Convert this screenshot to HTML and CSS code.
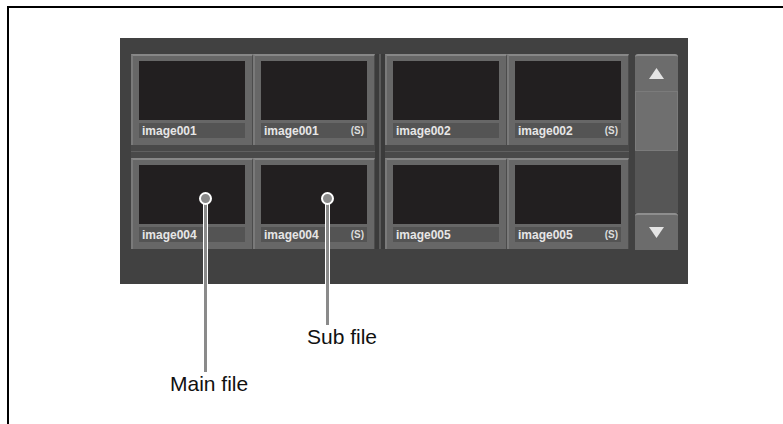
FILE: index.html
```html
<!DOCTYPE html>
<html lang="en">
<head>
  <meta charset="UTF-8">
  <title>Image file list</title>
  <link rel="stylesheet" href="styles.css">
</head>
<body>
  <!-- === FIGURE FRAME === -->
  <div class="figure">

    <!-- === FILE LIST PANEL === -->
    <div class="panel">
      <div class="grid">
        <div class="vsep"></div>
        <div class="hsep"></div>

        <div class="tile"><div class="screen"></div><div class="label"><span>image001</span></div></div>
        <div class="tile"><div class="screen"></div><div class="label"><span>image001</span><span class="sub">(S)</span></div></div>
        <div class="tile"><div class="screen"></div><div class="label"><span>image002</span></div></div>
        <div class="tile"><div class="screen"></div><div class="label"><span>image002</span><span class="sub">(S)</span></div></div>

        <div class="tile"><div class="screen"></div><div class="label"><span>image004</span></div></div>
        <div class="tile"><div class="screen"></div><div class="label"><span>image004</span><span class="sub">(S)</span></div></div>
        <div class="tile"><div class="screen"></div><div class="label"><span>image005</span></div></div>
        <div class="tile"><div class="screen"></div><div class="label"><span>image005</span><span class="sub">(S)</span></div></div>
      </div>

      <!-- === SCROLL BAR === -->
      <div class="scroll">
        <div class="btn">
          <svg width="15" height="11" viewBox="0 0 15 11"><polygon points="7.5,0 15,11 0,11" fill="#e4e4e4"/></svg>
        </div>
        <div class="thumb"></div>
        <div class="track"></div>
        <div class="btn">
          <svg width="15" height="11" viewBox="0 0 15 11"><polygon points="0,0 15,0 7.5,11" fill="#e4e4e4"/></svg>
        </div>
      </div>
    </div>

    <!-- === CALLOUTS === -->
    <div class="lead lead-main"></div>
    <div class="lead lead-sub"></div>
    <div class="dot dot-main"></div>
    <div class="dot dot-sub"></div>
    <div class="note note-main">Main file</div>
    <div class="note note-sub">Sub file</div>
  </div>
</body>
</html>
```

FILE: styles.css
```css
* {
  box-sizing: border-box;
}

body {
  margin: 0;
  background: #ffffff;
  font-family: "Liberation Sans", Arial, sans-serif;
  overflow: hidden;
}

.figure {
  position: relative;
  margin: 6px 0 0 7px;
  width: 776px;
  height: 418px;
  border-top: 2px solid #000;
  border-left: 2px solid #000;
  padding: 30px 0 0 111px;
}

.panel {
  width: 568px;
  height: 246px;
  background: #414141;
  padding: 16px 10px 0 11px;
  display: flex;
  align-items: flex-start;
}

.grid {
  display: grid;
  grid-template-columns: 122px 122px 10px 122px 122px;
  grid-template-rows: 91px 13px 91px;
}

.vsep {
  grid-column: 3;
  grid-row: 1 / 4;
  display: flex;
  justify-content: center;
  background: #3b3b3b;
  z-index: 1;
}

.vsep::before {
  content: "";
  width: 2px;
  background: #5a5a5a;
}

.hsep {
  grid-column: 1 / -1;
  grid-row: 2;
  background: #494949;
  padding-top: 6px;
}

.hsep::before {
  content: "";
  display: block;
  height: 1px;
  background: #606060;
}

.tile {
  background: #676767;
  border-top: 2px solid #878787;
  border-left: 2px solid #7a7a7a;
  border-right: 1px solid #4c4c4c;
  padding: 5px 7px 0 6px;
  display: flex;
  flex-direction: column;
}

.screen {
  height: 59px;
  background: #221f20;
}

.label {
  margin-top: 3px;
  height: 15px;
  background: #545454;
  display: flex;
  justify-content: space-between;
  align-items: center;
  padding: 0 3px;
  font-size: 12px;
  font-weight: bold;
  color: #e6e6e6;
}

.label .sub {
  font-size: 10px;
  color: #dcdcdc;
}

.scroll {
  width: 43px;
  height: 196px;
  margin-left: 6px;
  display: flex;
  flex-direction: column;
}

.btn {
  height: 37px;
  background: #6c6c6c;
  border-top: 2px solid #8e8e8e;
  border-radius: 3px 3px 0 0;
  display: flex;
  align-items: center;
  justify-content: center;
}

.btn svg {
  display: block;
}

.thumb {
  height: 60px;
  background: #6f6f6f;
  border: 1px solid #7b7b7b;
}

.track {
  flex: 1;
  background: #565656;
}

/* === CALLOUTS === */
.lead {
  position: absolute;
  top: 190px;
  width: 5px;
  background: #8a8a8a;
  border-left: 1px solid #fff;
  border-right: 1px solid #fff;
}

.lead-main {
  left: 194px;
  height: 174px;
}

.lead-sub {
  left: 316px;
  height: 127px;
}

.dot {
  position: absolute;
  top: 184px;
  width: 13px;
  height: 13px;
  border-radius: 50%;
  background: #8a8a8a;
  border: 2px solid #fff;
}

.dot-main {
  left: 190px;
}

.dot-sub {
  left: 312px;
}

.note {
  position: absolute;
  font-size: 21px;
  line-height: 21px;
  color: #111;
  white-space: nowrap;
}

.note-main {
  left: 161px;
  top: 365px;
}

.note-sub {
  left: 298px;
  top: 318px;
}
```
